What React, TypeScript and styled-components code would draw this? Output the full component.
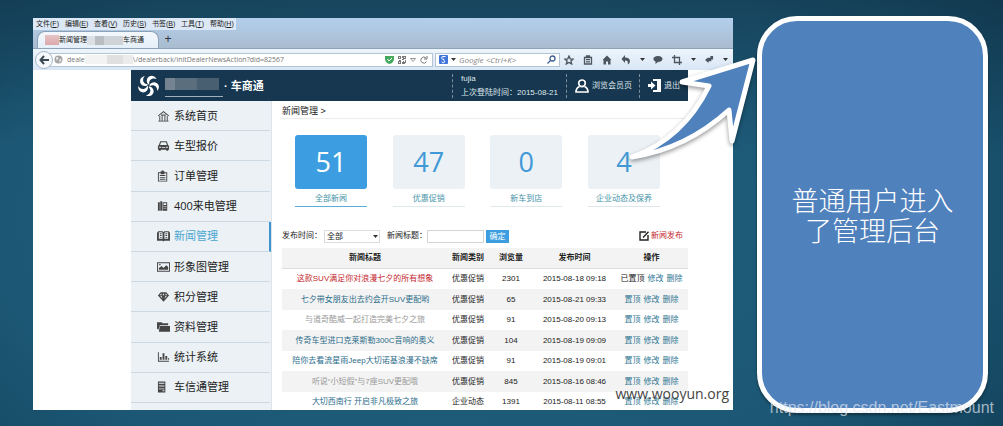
import React from 'react';
import styled, { createGlobalStyle, css } from 'styled-components';

const cjk = '"Liberation Sans", "Noto Sans CJK SC", sans-serif';
const ui = '"Open Sans", "Noto Sans CJK SC", sans-serif';

const GlobalStyle = createGlobalStyle`
  * { box-sizing: border-box; }
  body { margin: 0; font-family: ${cjk}; font-size: 8px; line-height: 12px; color: #222; }
  button, input, select { font: inherit; color: inherit; margin: 0; padding: 0; border: 0; background: none; }
  ul { list-style: none; margin: 0; padding: 0; }
  a { color: inherit; text-decoration: none; }
  svg { display: block; flex: none; }
`;

const Slide = styled.main`
  position: relative;
  display: flex;
  gap: 24px;
  height: 100vh;
  padding: 18px 15px 16px 33px;
  overflow: hidden;
  background:
    linear-gradient(180deg, rgba(14, 38, 56, 0.4), rgba(14, 38, 56, 0) 35%),
    radial-gradient(ellipse 75% 110% at 45% 50%, #1f607f 0%, #1c5875 60%, #164a65 80%, #10364e 100%);
`;

const Browser = styled.section`
  position: relative;
  flex: 1;
  min-width: 0;
  overflow: hidden;
  background: #fff;
`;

const Chrome = styled.header`
  background: linear-gradient(180deg, #b3cfec, #a9bccf 30px);
`;

const MenuBar = styled.nav`
  display: flex;
  gap: 7px;
  width: fit-content;
  height: 12px;
  padding: 0 4px 0 3px;
  background: #dce8f5;
  line-height: 12px;
`;

const MenuItem = styled.button`
  width: 22px;
  white-space: nowrap;
  font-size: 7px;
  line-height: 12px;
`;

const TabBar = styled.div`
  display: flex;
  align-items: flex-end;
  height: 18px;
  padding-left: 4px;
`;

const Tab = styled.div`
  display: flex;
  align-items: center;
  width: 122px;
  height: 17px;
  padding-left: 7px;
  border: 1px solid #8da2b8;
  border-bottom: 0;
  border-radius: 8px 8px 0 0;
  background: linear-gradient(#f4f8fc, #e4eff9);
`;

const TabText = styled.span`
  font-size: 7px;
  white-space: nowrap;
`;

const Mask = styled.span<{ $width: number; $height: number; $tone: string }>`
  flex: none;
  width: ${p => p.$width}px;
  height: ${p => p.$height}px;
  background: ${p => p.$tone};
`;

const NewTab = styled.button`
  width: 18px;
  height: 17px;
  font-size: 12px;
  line-height: 17px;
  color: #334;
`;

const NavBar = styled.div`
  display: flex;
  align-items: center;
  height: 22px;
  padding: 0 5px 0 2px;
  border-top: 1px solid #8fa3b8;
  background: linear-gradient(#eef5fc, #d8e6f5);
`;

const BackButton = styled.button`
  z-index: 1;
  display: grid;
  place-items: center;
  width: 18px;
  height: 18px;
  margin-right: -4px;
  border: 1px solid #a8b6c5;
  border-radius: 50%;
  background: #f4f9fd;
`;

const field = css`
  display: flex;
  align-items: center;
  height: 14px;
  border: 1px solid #b5c4d4;
  background: #fff;
  font-family: ${ui};
  color: #777;
`;

const Address = styled.label`
  ${field}
  flex: 1;
  min-width: 0;
  gap: 4px;
  padding: 0 4px;
  font-size: 7px;
`;

const UrlParts = styled.span`
  display: flex;
  flex: 1;
  align-items: center;
  min-width: 0;
`;

const UrlInput = styled.input`
  flex: 1;
  min-width: 0;
  outline: 0;
`;

const SearchBox = styled.label`
  ${field}
  gap: 3px;
  width: 125px;
  margin-left: 2px;
  padding: 0 3px;
`;

const SearchInput = styled.input`
  flex: 1;
  min-width: 0;
  font-style: italic;
  font-size: 8px;
  outline: 0;
  &::placeholder { color: #888; opacity: 1; }
`;

const Tools = styled.div`
  display: flex;
  align-items: center;
  justify-content: space-between;
  width: 164px;
  margin-left: 4px;
`;

const Tool = styled.button`
  display: grid;
  place-items: center;
  height: 14px;
  color: #4b5560;
`;

const Page = styled.div`
  margin: 0 45px 0 98px;
`;

const SiteHeader = styled.header`
  display: flex;
  align-items: center;
  height: 31px;
  padding-left: 7px;
  background: #16374f;
  color: #dfe7ec;
`;

const Brand = styled.div`
  display: flex;
  flex: 1;
  align-items: center;
  gap: 6px;
`;

const BrandMask = styled.span`
  width: 58px;
  height: 23px;
  padding-top: 4px;
  border-bottom: 1px solid #9fb0bd;
  &::before {
    content: '';
    display: block;
    width: 54px;
    height: 12px;
    background: linear-gradient(90deg, #74838f 0 10px, #5b6e7d 10px 32px, #475f71 32px);
  }
`;

const BrandName = styled.h1`
  margin: 0 0 0 -5px;
  font-size: 11px;
  line-height: 16px;
  color: #fff;
`;

const HeaderCell = styled.div<{ $width: number }>`
  display: flex;
  align-items: center;
  gap: 3px;
  width: ${p => p.$width}px;
  height: 24px;
  padding-left: 8px;
  border-left: 1px dashed #7b909f;
  white-space: nowrap;
`;

const Account = styled.div`
  display: flex;
  flex-direction: column;
  gap: 2px;
`;

const HeaderLink = styled.a`
  display: flex;
  align-items: center;
  gap: 3px;
`;

const Columns = styled.div`
  display: grid;
  grid-template-columns: 141px minmax(0, 1fr);
  gap: 10px;
`;

const Sidebar = styled.nav`
  border-right: 1px solid #dde5ea;
  background: #ebf1f5;
`;

const MenuList = styled.ul`
  display: grid;
  grid-auto-rows: 1fr;
  min-height: 302px;
  margin-bottom: 8px;
`;

const SideLink = styled.a<{ $active?: boolean }>`
  display: grid;
  grid-template-columns: 14px 1fr;
  align-items: center;
  gap: 3px;
  height: 100%;
  padding-left: 26px;
  border-bottom: 1px solid #ccd9e2;
  border-right: 2px solid ${p => (p.$active ? '#3d94cf' : 'transparent')};
  font: 11px/16px ${ui};
  color: ${p => (p.$active ? '#4aa5d0' : '#222')};
  svg { color: #454545; }
`;

const Crumb = styled.div`
  height: 18px;
  border-bottom: 1px solid #ececec;
  font-size: 9px;
  line-height: 20px;
`;

const Cards = styled.div`
  display: flex;
  justify-content: space-between;
  padding: 16px 28px 0 13px;
`;

const Card = styled.a<{ $active?: boolean }>`
  width: 72px;
  border-bottom: 1px solid ${p => (p.$active ? '#5aaed6' : '#e0e8ec')};
  color: #4593a8;
  text-align: center;
  line-height: 14px;
  strong {
    display: block;
    height: 54px;
    margin-bottom: 3px;
    border-radius: 3px;
    background: ${p => (p.$active ? '#3c9ee0' : '#ebf1f5')};
    color: ${p => (p.$active ? '#fff' : '#4098d6')};
    font: 400 27px/54px ${ui};
  }
`;

const Filters = styled.form`
  display: flex;
  align-items: center;
  height: 14px;
  margin: 22px 0 5px;
`;

const SelectWrap = styled.span`
  position: relative;
  width: 56px;
  margin: 0 7px 0 2px;
  svg { position: absolute; right: 2px; top: 5px; pointer-events: none; }
`;

const Select = styled.select`
  display: block;
  width: 100%;
  height: 13px;
  padding-left: 2px;
  appearance: none;
  border: 1px solid #dcdcdc;
`;

const TextInput = styled.input`
  width: 57px;
  height: 13px;
  border: 1px solid #d5d5d5;
`;

const Submit = styled.button`
  width: 23px;
  height: 13px;
  margin-left: 2px;
  background: #3c9ee0;
  color: #fff;
  line-height: 13px;
`;

const Publish = styled.a`
  display: flex;
  align-items: center;
  gap: 2px;
  margin: 0 5px 0 auto;
  color: #c4272d;
`;

const NewsTable = styled.table`
  width: 100%;
  table-layout: fixed;
  border-collapse: separate;
  border-spacing: 0;
  text-align: center;
  white-space: nowrap;
  th, td { padding: 0; }
  thead tr, tbody tr:nth-child(even) { background: #f3f3f3; }
  th { height: 21px; border-bottom: 1px solid #ddd; }
  tbody tr:nth-child(odd) td { height: 20px; }
  tbody tr:nth-child(even) td { height: 21px; }
`;

const titleColors = { hot: '#c4272d', normal: '#2b6c8a', off: '#999' };

const TitleLink = styled.a<{ $tone: keyof typeof titleColors }>`
  color: ${p => titleColors[p.$tone]};
`;

const Actions = styled.div`
  display: flex;
  justify-content: center;
  gap: 3px;
  a { color: #2f7793; }
`;

const SiteMark = styled.div`
  position: absolute;
  right: 4px;
  bottom: 6px;
  font: 14px/20px ${ui};
  color: #444;
`;

const Callout = styled.aside`
  display: grid;
  place-items: center;
  width: 231px;
  margin: -2px 0 -3px;
  border: 5px solid #fff;
  border-radius: 40px;
  background: #4f81bd;
  box-shadow: 0 2px 3px rgba(0, 0, 0, 0.4);
  color: #fff;
  font: 300 27px/30px "Noto Sans CJK SC", sans-serif;
  text-align: center;
  p { width: 170px; margin: 0; }
`;

const Arrow = styled.svg`
  position: absolute;
  left: 620px;
  top: 50px;
  filter: drop-shadow(0 2px 2px rgba(0, 0, 0, 0.4));
`;

const BlogMark = styled.div`
  position: absolute;
  right: 9px;
  bottom: 8px;
  font-size: 16px;
  line-height: 20px;
  color: rgba(225, 232, 240, 0.7);
`;

const icons: Record<string, React.ReactNode> = {
  home: <path d="M1 5.500 7 .5l6 5-.6.7L7 2 1.600 6.200ZM2.500 6h1v5h-1Zm8 0h1v5h-1ZM1.500 11h11v1h-11ZM5 5.500h1V11H5Zm3 0h1V11H8ZM4.500 4.500h5v1h-5Z" />,
  car: <path fillRule="evenodd" d="M3.500 1h7L12 5l1 1v4h-1v1h-2v-1H4v1H2v-1H1V6l1-1Zm.8 1-1 3h7.400l-1-3ZM2.300 6.800v1h2v-1Zm7.400 0v1h2v-1ZM5 7v1h4V7Z" />,
  order: <path fillRule="evenodd" d="M1 2h3V1h1V0h2v1h1v1h3v10H1Zm1 1v8h8V3H8v1H4V3Zm1 2h6v1H3Zm0 2h6v1H3Zm0 2h6v1H3Z" />,
  phone: <path fillRule="evenodd" d="M1 2h2v9H1Zm2.500-1h2v10h-2ZM6 2h5v9H6Zm1 1v2h3V3Zm0 3v1h1V6Zm2 0v1h1V6ZM7 8v1h1V8Zm2 0v1h1V8Z" />,
  news: <path fillRule="evenodd" d="M0 2h1V1h5l1 1 1-1h5v1h1v9H8l-1 1-1-1H0Zm2 0v7h4V3L5.500 2Zm6 1v6h4V2H8.500ZM3 3h2v1H3Zm0 2h2v1H3Zm0 2h2v1H3Zm6-4h2v1H9Zm0 2h2v1H9Zm0 2h2v1H9Z" />,
  image: <path fillRule="evenodd" d="M0 1h14v10H0Zm1 1v8h12V2Zm1 7V7l3-2 2 2 3-3 2 2v3Zm0-6h2v1H2Z" />,
  gem: <path fillRule="evenodd" d="M4 1h6l3 3.500L7 11 1 4.500ZM3 4h2L4.500 2ZM6 4h2L7 2Zm3 0h2L9.500 2ZM3.500 5 6 8 5 5Zm5.500 0L8 8l2.500-3Z" />,
  folder: <path d="M0 1h5l1 1h6v2H3L1.500 9 0 8Zm3 4h11v6H2Z" />,
  chart: <path d="M1 1h1v9h11v1H1Zm2 5h2v3H3Zm3-4h2v7H6Zm3 3h2v4H9Zm3 2h1v2h-1Z" />,
  server: <path fillRule="evenodd" d="M1 0h8v12H1Zm1 1.500v1h6v-1Zm0 3v1h6v-1Zm0 3v1h6v-1ZM6 9.500v1h2v-1Z" />,
};

const sideItems = [
  ['home', '系统首页'], ['car', '车型报价'], ['order', '订单管理'], ['phone', '400来电管理'],
  ['news', '新闻管理'], ['image', '形象图管理'], ['gem', '积分管理'], ['folder', '资料管理'],
  ['chart', '统计系统'], ['server', '车信通管理'],
];

const browserMenus = [
  ['文件', 'F'], ['编辑', 'E'], ['查看', 'V'], ['历史', 'S'], ['书签', 'B'], ['工具', 'T'], ['帮助', 'H'],
];

const cards = [
  ['51', '全部新闻'], ['47', '优惠促销'], ['0', '新车到店'], ['4', '企业动态及保养'],
];

type News = { title: string; tone: keyof typeof titleColors; kind: string; views: number; time: string };

const news: News[] = [
  { title: '这款SUV满足你对浪漫七夕的所有想象', tone: 'hot', kind: '优惠促销', views: 2301, time: '2015-08-18 09:18' },
  { title: '七夕带女朋友出去约会开SUV更配哟', tone: 'normal', kind: '优惠促销', views: 65, time: '2015-08-21 09:33' },
  { title: '与道奇酷威一起打造完美七夕之旅', tone: 'off', kind: '优惠促销', views: 91, time: '2015-08-20 09:13' },
  { title: '传奇车型进口克莱斯勒300C音响的奥义', tone: 'normal', kind: '优惠促销', views: 104, time: '2015-08-19 09:09' },
  { title: '陪你去看流星雨Jeep大切诺基浪漫不缺席', tone: 'normal', kind: '优惠促销', views: 91, time: '2015-08-19 09:01' },
  { title: '听说“小短假”与7座SUV更配哦', tone: 'off', kind: '优惠促销', views: 845, time: '2015-08-16 08:46' },
  { title: '大切西南行 开启非凡极致之旅', tone: 'normal', kind: '企业动态', views: 1391, time: '2015-08-11 08:55' },
];

const Caret = () => <svg width="5" height="3" viewBox="0 0 5 3"><path d="M0 0h5L2.500 3Z" fill="#333" /></svg>;

const ToolIcon = ({ d, solid, size = 10 }: { d: string; solid?: boolean; size?: number }) => (
  <svg width={size} height={size} viewBox="0 0 10 10" fill={solid ? 'currentColor' : 'none'}
    stroke={solid ? 'none' : 'currentColor'} strokeWidth="1.3" fillRule="evenodd"><path d={d} /></svg>
);

const Swirl = () => (
  <svg width="21" height="21" viewBox="0 0 21 21" fill="#fff">
    {[0, 72, 144, 216, 288].map(a => (
      <path key={a} transform={`rotate(${a} 10.500 10.500)`}
        d="M10.300 9.500C7 5.500 9.500.8 14 .8c2 .3 3.500 1.500 4.500 3.200C14.500 2.200 10.500 4.500 11.300 9.300Z" />
    ))}
  </svg>
);

const BrowserChrome = () => (
  <Chrome>
    <MenuBar aria-label="浏览器菜单">
      {browserMenus.map(([name, key]) => (
        <MenuItem key={key} type="button">{name}(<u>{key}</u>)</MenuItem>
      ))}
    </MenuBar>
    <TabBar>
      <Tab>
        <Mask $width={14} $height={10} $tone="linear-gradient(#e6c3c5, #dba9ac)" />
        <TabText>新闻管理</TabText>
        <Mask $width={36} $height={9} $tone="linear-gradient(90deg, #dcdfe3 0 8px, #b9bdc2 8px 17px, #cfd2d6 17px)" />
        <TabText>车商通</TabText>
      </Tab>
      <NewTab type="button" aria-label="新标签页">+</NewTab>
    </TabBar>
    <NavBar>
      <BackButton type="button" aria-label="后退">
        <svg width="10" height="10" viewBox="0 0 10 10" fill="none" stroke="#3c4854" strokeWidth="2"><path d="M5 1 1.500 5 5 9M2 5h8" /></svg>
      </BackButton>
      <Address>
        <svg width="9" height="9" viewBox="0 0 10 10"><circle cx="5" cy="5" r="4.500" fill="#a5a5a5" /><path d="M2 3l2-1 1 2-2 2ZM6 5l2-1v3L6 8Z" fill="#e8e8e8" /></svg>
        <UrlParts>
          <span>deale</span>
          <Mask $width={48} $height={9} $tone="linear-gradient(90deg, #f3f3f3 0 22px, #e0e0e0 22px 38px, #ececec 38px)" />
          <UrlInput aria-label="网址" defaultValue="\/dealerback/initDealerNewsAction?did=82567" />
        </UrlParts>
        <svg width="9" height="9" viewBox="0 0 9 9"><path d="M0 1h9v4q-1 3-4.500 4Q1 8 0 5Z" fill="#45a85d" /><path d="m2.500 4 1.500 2 3-3" fill="none" stroke="#fff" /></svg>
        <svg width="8" height="8" viewBox="0 0 8 8"><path fillRule="evenodd" fill="#777" d="M0 0h3v3H0Zm1 1v1h1V1Zm4-1h3v3H5Zm1 1v1h1V1ZM0 5h3v3H0Zm1 1v1h1V6ZM4 0h1v2H4Zm0 3h2v1H4ZM1 4h2v1H1Zm4 1h1v1h1V4h1v3H7v1H4V6h1Z" /></svg>
        <svg width="6" height="4" viewBox="0 0 6 4"><path d="M.5.5h5L3 3.500Z" fill="none" stroke="#999" /></svg>
        <svg width="8" height="8" viewBox="0 0 8 8"><path d="M6.500 5.500A3 3 0 1 1 6 2M7 0v3H4" fill="none" stroke="#777" /></svg>
      </Address>
      <SearchBox>
        <svg width="9" height="9" viewBox="0 0 9 9"><rect width="9" height="9" rx="1" fill="#3f74d8" /><path d="M6.500 1.500H4a1.400 1.400 0 1 0 1 2.500q-1 1 0 1.500a1.300 1.300 0 1 1-2 1" fill="none" stroke="#fff" /></svg>
        <Caret />
        <SearchInput aria-label="搜索" placeholder="Google <Ctrl+K>" />
        <svg width="9" height="9" viewBox="0 0 9 9" fill="none" stroke="#3c5f94" strokeWidth="1.300"><circle cx="5.500" cy="3.500" r="2.500" /><path d="M3.500 5.500.5 8.500" /></svg>
      </SearchBox>
      <Tools>
        <Tool type="button" aria-label="收藏"><ToolIcon d="m5 1 1.200 2.800 3 .2-2.300 2 .8 3L5 7.400 2.300 9l.8-3L.8 4l3-.2Z" /></Tool>
        <Tool type="button" aria-label="书签列表"><ToolIcon d="M1.500 2.500h7v6.500h-7ZM3.500 2.500V1h3v1.500M3 4.700h4M3 6.800h4" /></Tool>
        <Tool type="button" aria-label="主页"><ToolIcon solid d="M5 .5 9.500 5H8.500v4.500H6V6.500H4v3H1.500V5H.5Z" /></Tool>
        <Tool type="button" aria-label="撤销"><ToolIcon solid d="M4 0v2.500q5 0 5 4Q9 8.500 6.500 9.500 8 5.500 4 5.500V8L.5 4Z" /></Tool>
        <Tool type="button" aria-label="更多撤销"><Caret /></Tool>
        <Tool type="button" aria-label="聊天"><ToolIcon solid d="M5 1c6 0 6 6 0 6L2.500 9V6.500C-1 5 0 1 5 1Z" /></Tool>
        <Tool type="button" aria-label="截图"><ToolIcon d="M2.500 0v7.500H10M0 2.500h7.500V10" /></Tool>
        <Tool type="button" aria-label="更多截图"><Caret /></Tool>
        <Tool type="button" aria-label="扩展"><ToolIcon solid size={9} d="M3 3h3V1h3v4H7v2H4v2L0 5.500 3 3Z" /></Tool>
        <Tool type="button" aria-label="更多扩展"><Caret /></Tool>
      </Tools>
    </NavBar>
  </Chrome>
);

export default function App() {
  return (
    <>
      <GlobalStyle />
      <Slide>
        <Browser>
          <BrowserChrome />
          <Page>
            <SiteHeader>
              <Brand>
                <Swirl />
                <BrandMask />
                <BrandName>· 车商通</BrandName>
              </Brand>
              <HeaderCell $width={114}>
                <Account><span>fujia</span><span>上次登陆时间：2015-08-21</span></Account>
              </HeaderCell>
              <HeaderCell $width={73}>
                <HeaderLink href="#member">
                  <svg width="14" height="14" viewBox="0 0 14 14" fill="none" stroke="#fff" strokeWidth="1.700"><circle cx="7" cy="4.300" r="3.300" /><path d="M4.500 7.500Q1 9 1 13h12q0-4-3.500-5.500" /></svg>
                  浏览会员页
                </HeaderLink>
              </HeaderCell>
              <HeaderCell $width={49}>
                <HeaderLink href="#logout">
                  <svg width="13" height="13" viewBox="0 0 13 13" fill="#fff"><path d="M5 0h8v13H5v-2h4V2H5Z" /><path d="M0 5h3V2.500L7.500 6.500 3 10.500V8H0Z" /></svg>
                  退出
                </HeaderLink>
              </HeaderCell>
            </SiteHeader>
            <Columns>
              <Sidebar aria-label="管理菜单">
                <MenuList>
                  {sideItems.map(([icon, name]) => (
                    <li key={icon}>
                      <SideLink href={`#${icon}`} $active={icon === 'news'}>
                        <svg width="13" height="12" viewBox="0 0 14 12" fill="currentColor">{icons[icon]}</svg>
                        {name}
                      </SideLink>
                    </li>
                  ))}
                </MenuList>
              </Sidebar>
              <section>
                <Crumb>新闻管理 &gt;</Crumb>
                <Cards>
                  {cards.map(([count, name], i) => (
                    <Card key={name} href={`#news-${i}`} $active={i === 0}><strong>{count}</strong>{name}</Card>
                  ))}
                </Cards>
                <Filters onSubmit={e => e.preventDefault()}>
                  <label htmlFor="period">发布时间：</label>
                  <SelectWrap>
                    <Select id="period"><option>全部</option></Select>
                    <Caret />
                  </SelectWrap>
                  <label htmlFor="headline">新闻标题：</label>
                  <TextInput id="headline" type="text" />
                  <Submit type="submit">确定</Submit>
                  <Publish href="#publish">
                    <svg width="10" height="10" viewBox="0 0 10 10" fill="none" stroke="#222" strokeWidth="1.400"><path d="M7 1H1v8h8V4M4 6.500 9.500.8" /></svg>
                    新闻发布
                  </Publish>
                </Filters>
                <NewsTable>
                  <colgroup>
                    <col /><col width="40" /><col width="46" /><col width="81" /><col width="73" />
                  </colgroup>
                  <thead>
                    <tr><th>新闻标题</th><th>新闻类别</th><th>浏览量</th><th>发布时间</th><th>操作</th></tr>
                  </thead>
                  <tbody>
                    {news.map((n, i) => (
                      <tr key={n.title}>
                        <td><TitleLink href={`#item-${i}`} $tone={n.tone}>{n.title}</TitleLink></td>
                        <td>{n.kind}</td>
                        <td>{n.views}</td>
                        <td>{n.time}</td>
                        <td>
                          <Actions>
                            {i === 0 ? <span>已置顶</span> : <a href="#top">置顶</a>}
                            <a href="#edit">修改</a>
                            <a href="#delete">删除</a>
                          </Actions>
                        </td>
                      </tr>
                    ))}
                  </tbody>
                </NewsTable>
              </section>
            </Columns>
          </Page>
          <SiteMark>www.wooyun.org</SiteMark>
        </Browser>
        <Callout><p>普通用户进入了管理后台</p></Callout>
        <Arrow width="144" height="116" viewBox="620 50 144 116" aria-hidden="true">
          <path d="M632 157Q683 139 709 86L682 82 753 60 732 141 729 110Q686 149 632 157Z" fill="#4f81bd" stroke="#fff" strokeWidth="5" strokeLinejoin="round" />
        </Arrow>
        <BlogMark>https://blog.csdn.net/Eastmount</BlogMark>
      </Slide>
    </>
  );
}
